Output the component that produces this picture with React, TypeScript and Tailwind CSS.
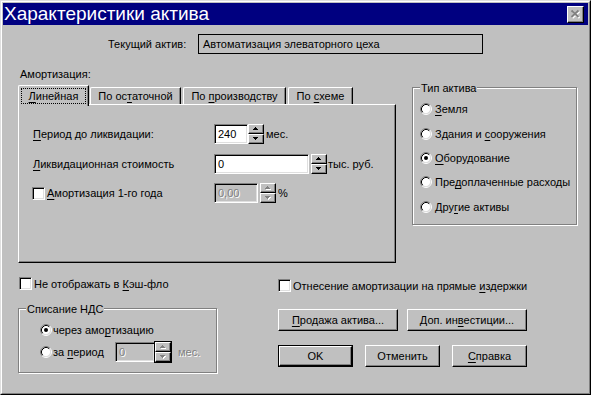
import type { ReactNode } from "react";

const raised =
  "bg-[#c0c0c0] border border-t-white border-l-white border-r-black border-b-black shadow-[inset_-1px_-1px_#808080]";
const sunken =
  "border border-t-[#808080] border-l-[#808080] border-r-white border-b-white shadow-[inset_1px_1px_black,inset_-1px_-1px_#dfdfdf]";
const dim = "text-[#808080] [text-shadow:1px_1px_0_#fff]";

const U = ({ children }: { children: ReactNode }) => <span className="underline underline-offset-[2px]">{children}</span>;

const Arrow = ({ up, off }: { up?: boolean; off?: boolean }) => {
  const rows = up
    ? [
        [2, 1],
        [1, 3],
        [0, 5],
      ]
    : [
        [0, 5],
        [1, 3],
        [2, 1],
      ];
  return (
    <svg width="6" height="4" viewBox="0 0 6 4" shapeRendering="crispEdges">
      {off && rows.map(([x, w], i) => <rect key={"s" + i} x={x + 1} y={i + 1} width={w} height="1" fill="#fff" />)}
      {rows.map(([x, w], i) => (
        <rect key={i} x={x} y={i} width={w} height="1" fill={off ? "#808080" : "#000"} />
      ))}
    </svg>
  );
};

const Spin = ({ off, framed }: { off?: boolean; framed?: boolean }) => (
  <div className={`flex flex-col w-[16px] h-[20px] shrink-0 ${framed ? "outline outline-1 outline-black" : ""}`}>
    <div className={`${raised} h-[10px] flex items-center justify-center`}>
      <Arrow up off={off} />
    </div>
    <div className={`${raised} h-[10px] flex items-center justify-center`}>
      <Arrow off={off} />
    </div>
  </div>
);

const Field = ({ w, value, off }: { w: string; value: string; off?: boolean }) => (
  <div className={`${sunken} ${w} h-[20px] shrink-0 flex items-center pl-[3px] ${off ? "bg-[#c0c0c0] " + dim : "bg-white"}`}>
    {value}
  </div>
);

const Check = () => <div className={`${sunken} w-[13px] h-[13px] bg-white shrink-0`} />;

const Radio = ({ on }: { on?: boolean }) => (
  <svg width="12" height="12" viewBox="0 0 12 12" className="shrink-0">
    <circle cx="6" cy="6" r="4.5" fill="#fff" />
    <path d="M2.11 9.89A5.5 5.5 0 0 1 9.89 2.11" fill="none" stroke="#808080" />
    <path d="M9.89 2.11A5.5 5.5 0 0 1 2.11 9.89" fill="none" stroke="#fff" />
    <path d="M2.82 9.18A4.5 4.5 0 0 1 9.18 2.82" fill="none" stroke="#000" />
    <path d="M9.18 2.82A4.5 4.5 0 0 1 2.82 9.18" fill="none" stroke="#dfdfdf" />
    {on && <circle cx="6" cy="6" r="2" fill="#000" />}
  </svg>
);

const Group = ({ label, className, children }: { label: string; className: string; children: ReactNode }) => (
  <div className={`relative border border-[#808080] shadow-[inset_1px_1px_#fff,1px_1px_#fff] ${className}`}>
    <span className="absolute -top-[7px] left-[7px] bg-[#c0c0c0] px-px leading-[14px]">{label}</span>
    {children}
  </div>
);

const Btn = ({ w, def, children }: { w: string; def?: boolean; children: ReactNode }) => (
  <div className={`${w} h-[22px] ${def ? "border border-black" : ""}`}>
    <div className={`${raised} w-full h-full flex items-center justify-center`}>
      <span className="whitespace-nowrap">{children}</span>
    </div>
  </div>
);

const Tab = ({ w, children }: { w: string; children: ReactNode }) => (
  <div
    className={`${w} h-[17px] border-t border-l border-r border-t-white border-l-white border-r-black shadow-[inset_-1px_0_#808080] rounded-tl-[2px] flex items-center justify-center`}
  >
    <span className="whitespace-nowrap">{children}</span>
  </div>
);

const RadioRow = ({ h, on, children }: { h: string; on?: boolean; children: ReactNode }) => (
  <div className={`${h} flex items-center`}>
    <Radio on={on} />
    <span className="ml-[3px] whitespace-nowrap">{children}</span>
  </div>
);

export default function App() {
  return (
    <div className="w-[591px] h-[395px] bg-[#c0c0c0] border border-t-[#dfdfdf] border-l-[#dfdfdf] border-r-black border-b-black font-['Liberation_Sans',Arial,sans-serif] text-[11px] leading-[14px] text-black select-none">
      <div className="h-full border border-t-white border-l-white border-r-[#808080] border-b-[#808080] p-px flex flex-col">
        {/* title bar */}
        <div className="h-[22px] shrink-0 bg-[#000080] flex items-center justify-between pl-px pr-[4px]">
          <span className="text-white text-[19px] leading-[22px]">Характеристики актива</span>
          <div className={`${raised} w-[17px] h-[17px] flex items-center justify-center`}>
            <svg width="11" height="10" viewBox="0 0 11 10">
              <path d="M2.5 2.5L9.5 9M9.5 2.5L2.5 9" stroke="#fff" strokeWidth="1.8" />
              <path d="M1.5 1.5L8.5 8M8.5 1.5L1.5 8" stroke="#808080" strokeWidth="1.8" />
            </svg>
          </div>
        </div>

        {/* current asset */}
        <div className="flex items-center mt-[9px] ml-[105px] h-[20px]">
          <span className="w-[90px]">Текущий актив:</span>
          <div className="w-[285px] h-[20px] border border-black flex items-center pl-[4px]">
            Автоматизация элеваторного цеха
          </div>
        </div>

        {/* amortization + asset type */}
        <div className="flex">
          <div className="ml-[15px] w-[378px]">
            <div className="mt-[13px] ml-[2px]">Амортизация:</div>
            <div className="mt-[4px] h-[19px] flex items-end">
              <div className="relative z-10 w-[71px] h-[21px] -mb-[2px] bg-[#c0c0c0] border-t border-l border-r border-t-white border-l-white border-r-black shadow-[inset_-1px_0_#808080] rounded-tl-[2px] flex items-center justify-center">
                <span className="border border-dotted border-black w-[65px] h-[16px] flex items-center justify-center -mt-px">
                  <span>
                    <U>Л</U>инейная
                  </span>
                </span>
              </div>
              <div className="ml-px">
                <Tab w="w-[91px]">
                  По ос<U>т</U>аточной
                </Tab>
              </div>
              <div className="ml-[2px]">
                <Tab w="w-[103px]">
                  По <U>п</U>роизводству
                </Tab>
              </div>
              <div className="ml-[2px]">
                <Tab w="w-[65px]">
                  По <U>с</U>хеме
                </Tab>
              </div>
            </div>
            <div className="h-[159px] border border-t-white border-l-white border-r-black border-b-black shadow-[inset_-1px_-1px_#808080] pt-[19px] pl-[14px]">
              <div className="flex items-center h-[20px]">
                <span className="w-[181px]">
                  <U>П</U>ериод до ликвидации:
                </span>
                <Field w="w-[34px]" value="240" />
                <Spin />
                <span className="ml-[2px]">мес.</span>
              </div>
              <div className="flex items-center h-[20px] mt-[10px]">
                <span className="w-[181px]">
                  <U>Л</U>иквидационная стоимость
                </span>
                <Field w="w-[95px]" value="0" />
                <div className="ml-[2px]">
                  <Spin />
                </div>
                <span className="ml-px">тыс. руб.</span>
              </div>
              <div className="flex items-center h-[20px] mt-[9px]">
                <div className="w-[182px] -ml-px flex items-center">
                  <Check />
                  <span className="ml-[2px]">
                    <U>А</U>мортизация 1-го года
                  </span>
                </div>
                <Field w="w-[44px]" value="0,00" off />
                <div className="ml-[2px]">
                  <Spin off />
                </div>
                <span className="ml-[2px]">%</span>
              </div>
            </div>
          </div>

          <Group label="Тип актива" className="ml-[16px] mt-[33px] w-[165px] h-[138px] pt-[9px] pl-[7px]">
            <RadioRow h="h-[24px]">
              <U>З</U>емля
            </RadioRow>
            <RadioRow h="h-[25px]">
              Здания и <U>с</U>ооружения
            </RadioRow>
            <RadioRow h="h-[24px]" on>
              <U>О</U>борудование
            </RadioRow>
            <RadioRow h="h-[24px]">
              Пре<U>д</U>оплаченные расходы
            </RadioRow>
            <RadioRow h="h-[25px]">
              Дру<U>г</U>ие активы
            </RadioRow>
          </Group>
        </div>

        {/* bottom */}
        <div className="flex">
          <div className="w-[275px]">
            <div className="mt-[14px] ml-[16px] flex items-center h-[13px]">
              <Check />
              <span className="ml-[2px]">
                Не отображать в <U>К</U>эш-фло
              </span>
            </div>
            <Group label="Списание НДС" className="mt-[18px] ml-[15px] w-[199px] h-[65px] pt-[11px] pl-[21px]">
              <div className="h-[20px] flex items-center">
                <Radio on />
                <span className="ml-px">
                  через амо<U>р</U>тизацию
                </span>
              </div>
              <div className="h-[20px] mt-[2px] flex items-center">
                <div className="w-[75px] flex items-center">
                  <Radio />
                  <span className="ml-px">
                    за <U>п</U>ериод
                  </span>
                </div>
                <Field w="w-[40px]" value="0" off />
                <Spin off framed />
                <span className={`ml-[7px] ${dim}`}>мес.</span>
              </div>
            </Group>
          </div>

          <div className="flex-1">
            <div className="mt-[16px] flex items-center h-[13px]">
              <Check />
              <span className="ml-[2px]">
                Отнесение амортизации на прямые <U>и</U>здержки
              </span>
            </div>
            <div className="mt-[17px] flex gap-[9px]">
              <Btn w="w-[120px]">
                <U>П</U>родажа актива...
              </Btn>
              <Btn w="w-[120px]">
                Доп. ин<U>в</U>естиции...
              </Btn>
            </div>
            <div className="mt-[14px] flex gap-[12px]">
              <Btn w="w-[75px]" def>
                OK
              </Btn>
              <Btn w="w-[75px]">Отменить</Btn>
              <Btn w="w-[75px]">
                <U>С</U>правка
              </Btn>
            </div>
          </div>
        </div>
      </div>
    </div>
  );
}
